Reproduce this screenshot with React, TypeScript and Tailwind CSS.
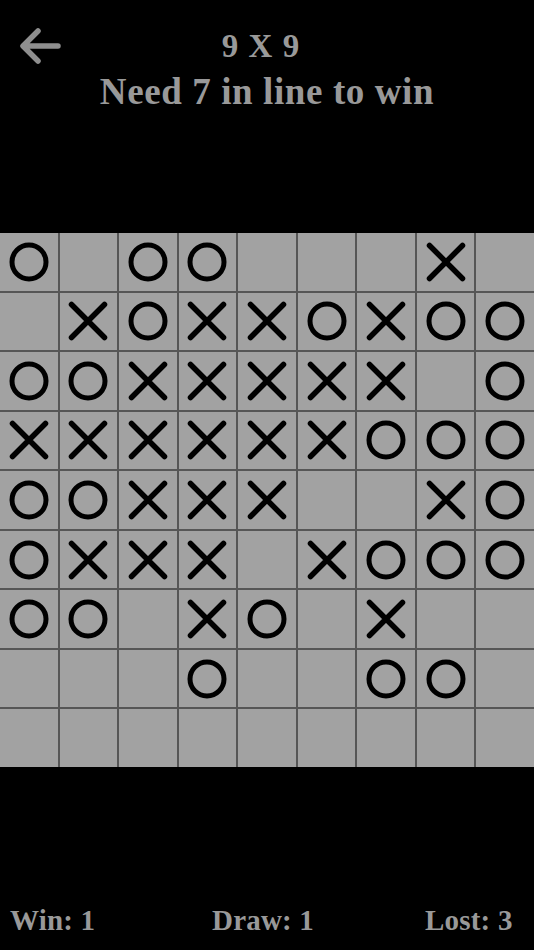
import React from "react";

const board: string[] = [
  "O.OO...X.",
  ".XOXXOXOO",
  "OOXXXXX.O",
  "XXXXXXOOO",
  "OOXXX..XO",
  "OXXX.XOOO",
  "OO.XO.X..",
  "...O..OO.",
  ".........",
];

function Mark({ v }: { v: string }) {
  if (v === "O")
    return (
      <svg width="40" height="40" viewBox="0 0 40 40">
        <circle cx="20" cy="20" r="17" fill="none" stroke="#000" strokeWidth="5" />
      </svg>
    );
  if (v === "X")
    return (
      <svg width="40" height="40" viewBox="0 0 40 40">
        <path d="M3.5 3.5 L36.5 36.5 M36.5 3.5 L3.5 36.5" stroke="#000" strokeWidth="5.5" strokeLinecap="round" fill="none" />
      </svg>
    );
  return null;
}

export default function App() {
  const serif = { fontFamily: '"Liberation Serif", "DejaVu Serif", serif' };
  return (
    <div className="w-[534px] h-[950px] bg-black flex flex-col overflow-hidden" style={serif}>
      <div className="grid grid-cols-[1fr_auto_1fr] items-start pt-[25px]">
        <div className="pl-[19px] pt-[2px]">
          <svg width="42" height="38" viewBox="0 0 42 38">
            <path d="M39 19 H5 M19 4 L4 19 L19 34" stroke="#8e8e8e" strokeWidth="5.5" strokeLinecap="round" strokeLinejoin="round" fill="none" />
          </svg>
        </div>
        <div className="text-[#999999] font-bold text-[33px] leading-[42px] tracking-[1px] text-center pr-[12px]">9 X 9</div>
        <div />
      </div>
      <div className="text-[#999999] font-bold text-[37px] leading-[46px] tracking-[0.6px] text-center mt-[2px]">
        Need 7 in line to win
      </div>
      <div className="mt-[118px] w-[534px] h-[534px] bg-[#565656] grid grid-cols-9 grid-rows-9 gap-[2px]">
        {board.flatMap((row, r) =>
          row.split("").map((c, i) => (
            <div key={r + "-" + i} className="bg-[#a2a2a2] flex items-center justify-center">
              <Mark v={c} />
            </div>
          ))
        )}
      </div>
      <div className="flex-1" />
      <div className="grid grid-cols-[202px_213px_1fr] items-end px-[10px] pb-[12px] text-[#999999] font-bold text-[29px] leading-[36px] tracking-[0.2px]">
        <span>Win: 1</span>
        <span>Draw: 1</span>
        <span>Lost: 3</span>
      </div>
    </div>
  );
}
